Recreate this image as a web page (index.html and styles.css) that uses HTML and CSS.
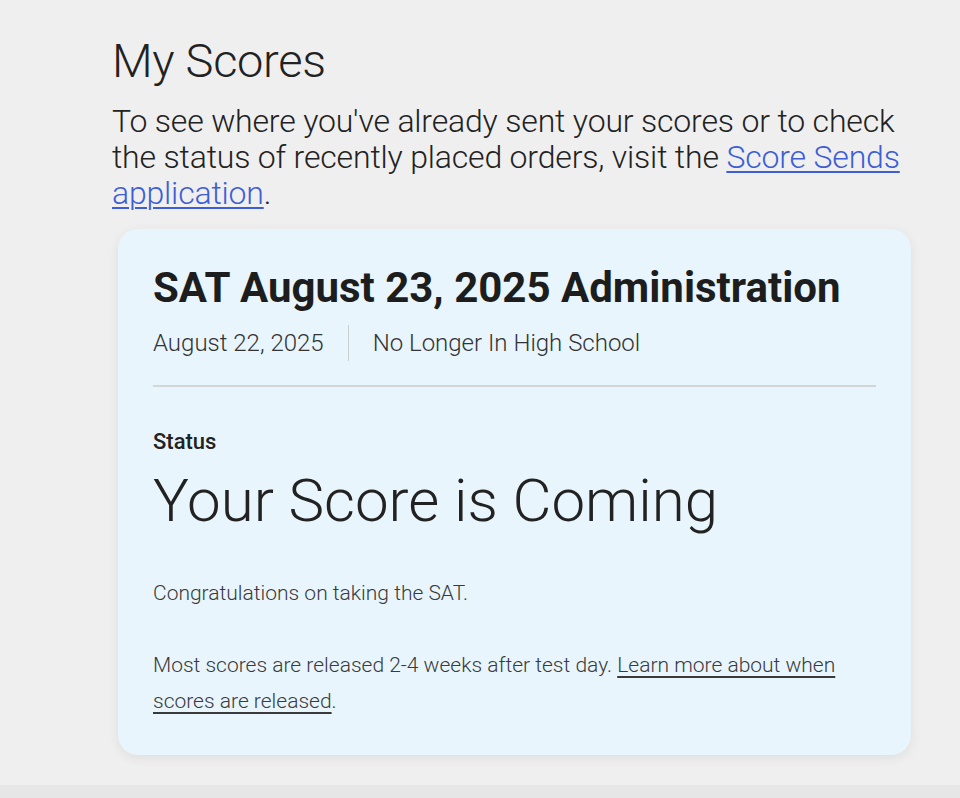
FILE: index.html
```html
<!DOCTYPE html>
<html>
<head>
<meta charset="utf-8">
<link rel="stylesheet" href="styles.css">
</head>
<body>
<main class="page">
  <h1 class="page-title">My Scores</h1>
  <p class="intro">To see where you've already sent your scores or to check the status of recently placed orders, visit the <a href="#" class="intro-link">Score Sends application</a>.</p>
  <section class="card">
    <h2 class="card-title">SAT August 23, 2025 Administration</h2>
    <div class="meta">
      <span class="meta-item">August 22, 2025</span>
      <span class="meta-sep"></span>
      <span class="meta-item">No Longer In High School</span>
    </div>
    <hr class="rule">
    <div class="status-label">Status</div>
    <div class="status">Your Score is Coming</div>
    <p class="note note-first">Congratulations on taking the SAT.</p>
    <p class="note note-last">Most scores are released 2-4 weeks after test day. <a href="#" class="note-link">Learn more about when scores are released</a>.</p>
  </section>
</main>
<div class="bottom-strip"></div>
</body>
</html>
```
FILE: styles.css
```css
html, body {
  margin: 0;
  padding: 0;
  background: #efefef;
  font-family: Roboto, "Noto Sans", sans-serif;
  color: #1e1e1e;
}
body {
  width: 960px;
  height: 798px;
  overflow: hidden;
  position: relative;
}
.page {
  padding: 33px 0 0 112px;
  width: 800px;
}
.page-title {
  margin: 0;
  font-weight: 300;
  font-size: 47px;
  line-height: 56px;
  letter-spacing: -0.3px;
  color: #222;
}
.intro {
  margin: 14px 0 0 0;
  font-weight: 300;
  font-size: 32px;
  line-height: 36px;
  letter-spacing: -0.18px;
  color: #222;
}
.intro-link {
  color: #3d5ed6;
  text-decoration: underline;
  text-underline-offset: 3px;
  text-decoration-thickness: 2px;
}
.card {
  margin: 18px 0 0 6px;
  width: 793px;
  height: 526px;
  box-sizing: border-box;
  background: #e8f5fc;
  border-radius: 20px;
  box-shadow: 0 3px 12px rgba(0,0,0,0.07);
  padding: 34px 35px 0 35px;
}
.card-title {
  margin: 0;
  font-weight: 700;
  font-size: 42px;
  line-height: 50px;
  color: #1d1d1d;
}
.meta {
  display: flex;
  align-items: center;
  margin-top: 12px;
  height: 36px;
}
.meta-item {
  font-weight: 300;
  font-size: 24px;
  color: #333;
}
.meta-sep {
  width: 1px;
  height: 36px;
  background: #c8cfd3;
  margin: 0 24px;
}
.rule {
  margin: 24px 0 0 0;
  border: 0;
  height: 2px;
  background: #d3d6d8;
}
.status-label {
  margin-top: 41px;
  font-weight: 500;
  font-size: 22px;
  line-height: 28px;
  color: #222;
}
.status {
  margin-top: 10px;
  font-weight: 300;
  font-size: 60px;
  line-height: 70px;
  color: #222;
}
.note {
  margin: 0;
  font-weight: 300;
  font-size: 21px;
  line-height: 36px;
  color: #3a3a3a;
}
.note-first {
  margin-top: 39px;
}
.note-last {
  margin-top: 36px;
}
.note-link {
  color: #3a3a3a;
  text-decoration: underline;
  text-underline-offset: 4px;
  text-decoration-thickness: 2px;
}
.bottom-strip {
  position: absolute;
  left: 0;
  right: 0;
  bottom: 0;
  height: 13px;
  background: #e6e6e6;
}
```
